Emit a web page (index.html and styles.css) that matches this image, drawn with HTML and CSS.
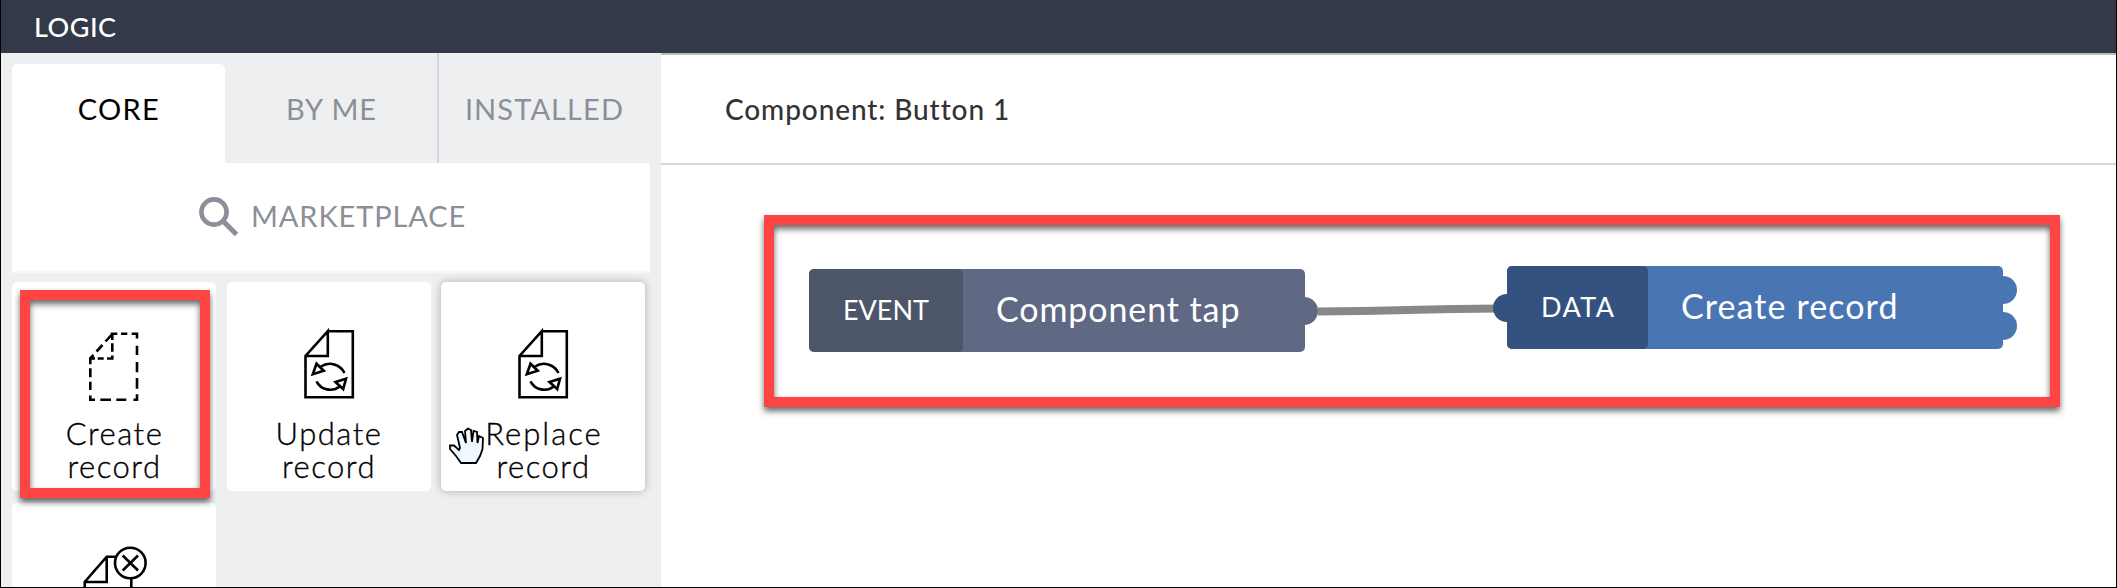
FILE: index.html
```html
<!DOCTYPE html>
<html lang="en">
<head>
<meta charset="utf-8">
<title>Logic</title>
<link rel="stylesheet" href="styles.css">
</head>
<body>
<div class="app">
  <header class="topbar"><span class="t-logic">LOGIC</span></header>
  <div class="main">
    <aside class="sidebar">
      <nav class="tabs">
        <div class="tab active"><span class="t-core">CORE</span></div>
        <div class="tab"><span class="t-byme">BY ME</span></div>
        <div class="tab divided"><span class="t-inst">INSTALLED</span></div>
      </nav>
      <div class="market">
        <svg class="search" width="42" height="42" viewBox="0 0 42 42"><circle cx="16" cy="16" r="12.6" fill="none" stroke="#8c8f97" stroke-width="4.6"/><path d="M26 26 L38.500 38.500" stroke="#8c8f97" stroke-width="5"/></svg>
        <span class="t-market">MARKETPLACE</span>
      </div>
      <div class="tiles">
        <div class="tile">
          <svg class="icon" width="70" height="72" viewBox="0 0 70 72" fill="none" stroke="#000" stroke-width="2.600"><path d="M31.700 3.800H38.300M42 3.800H48.300M52.700 3.800H58V8.500M58 15.700V25M58 32V42.300M58 48V58.700M58 64.300V69.700H54.500M47.300 69.700H37.300M32 69.700H21.300M16 69.700H11.300V65.500M11.300 60V51.700M11.300 47.300V38.300M11.300 34.300V28.500H16M18.700 28.500H24.700M28 28.500H33.300V25.500M33.300 21.700V13.300M33.300 10V3.800M11.300 28.500L14.500 25M17.500 21.500L23.500 15M26.500 11.500L33.300 4"/></svg>
          <div class="label"><span class="t-create">Create</span><span class="t-rec">record</span></div>
        </div>
        <div class="tile">
          <svg class="icon" width="70" height="72" viewBox="0 0 70 72"><use href="#sync"/></svg>
          <div class="label"><span class="t-update">Update</span><span class="t-rec">record</span></div>
        </div>
        <div class="tile hover">
          <svg class="icon" width="70" height="72" viewBox="0 0 70 72"><use href="#sync"/></svg>
          <div class="label"><span class="t-replace">Replace</span><span class="t-rec">record</span></div>
        </div>
        <div class="tile">
          <svg class="icon" width="70" height="72" viewBox="0 0 70 72" fill="none" stroke="#000" stroke-width="2.600"><path d="M37 5.700H27.700L5.700 31V72M5.700 31H27.700V5.700M52.300 27.700V72"/><circle cx="51.300" cy="12" r="15.300"/><path d="M43.700 4.500L59 19.500M59 4.500L43.700 19.500"/></svg>
        </div>
      </div>
    </aside>
    <section class="work">
      <div class="title"><span class="t-title">Component: Button 1</span></div>
      <div class="canvas">
        <svg class="wire" width="200" height="30" viewBox="0 0 200 30"><path d="M10 18.500C100 18.500 100 15.500 192 15.500" fill="none" stroke="#888" stroke-width="8"/></svg>
        <div class="node event"><i class="knob k-e"></i><div class="kind"><span class="t-event">EVENT</span></div><span class="t-tap">Component tap</span></div>
        <div class="node data"><i class="knob k-l"></i><i class="knob k-r1"></i><i class="knob k-r2"></i><div class="kind"><span class="t-data">DATA</span></div><span class="t-cr">Create record</span></div>
      </div>
    </section>
  </div>
  <div class="mark mark-tile"></div>
  <div class="mark mark-flow"></div>
  <svg class="hand" width="38" height="38" viewBox="0 0 38 38"><path d="M13 36L8 29L2 22V18.500H6L11 23L12 21L9 8L11 5H14L18 16L17 4L20 1.500L23 3L24 15L25.500 4L29 5L29.500 16L31 9L35 11L34.500 22L32 29L28 36Z" fill="#eff7ff" stroke="#000" stroke-width="1.800"/></svg>
</div>
<svg width="0" height="0" class="defs"><defs><g id="sync" fill="none" stroke="#000" stroke-width="2.600"><path d="M33.800 1.200H58.800V67.200H11.500V26L33.800 1.200V26H11.500"/><path d="M27 36.500A16.200 16.200 0 0 1 50.500 43M22.500 51.300A15.500 15.500 0 0 0 45.800 56.500"/><path d="M22.500 33.700L18.800 44.300L29.800 40.700ZM41.500 52L52 48.700L49.200 59Z"/></g></defs></svg>
</body>
</html>
```
FILE: styles.css
```css
* { box-sizing: border-box; }
body { margin: 0; font-family: Lato, "Open Sans", sans-serif; }
span { white-space: nowrap; }
.app { position: relative; width: 2117px; height: 588px; display: flex; flex-direction: column; overflow: hidden; border: 1px solid #000; border-top: 0; background: #fff; }
.topbar { height: 53px; background: #343949; color: #fff; padding-left: 33px; display: flex; align-items: center; font-size: 27px; font-weight: 500; letter-spacing: .5px; }
.main { flex: 1; min-height: 0; display: flex; }
.sidebar { width: 660px; background: #eeeff1; padding: 0 11px; }
.tabs { display: flex; height: 110px; color: #8c8f97; font-size: 29px; }
.tab { flex: 0 0 213px; display: flex; align-items: center; justify-content: center; }
.tab.active { margin-top: 11px; padding-bottom: 11px; background: #fff; color: #000; border-radius: 5px 5px 0 0; }
.tab.divided { margin-left: -1px; border-left: 2px solid #d5d6da; }
.t-core { letter-spacing: 1.3px; margin-right: -1px; }
.t-byme { letter-spacing: 1px; }
.t-inst { letter-spacing: 1.100px; }
.market { width: 638px; height: 110px; background: #fff; border-bottom: 2px solid #f7f8f9; display: flex; align-items: center; padding-left: 186px; gap: 11px; color: #8c8f97; font-size: 29px; }
.t-market { letter-spacing: .9px; padding-bottom: 3px; }
.tiles { display: grid; grid-template-columns: repeat(3, 204px); grid-auto-rows: 209px; gap: 12px 10.500px; padding-top: 9px; }
.tile { background: #fff; border-radius: 5px; display: flex; flex-direction: column; align-items: center; padding-top: 48px; }
.tile.hover { box-shadow: 0 0 8px rgba(0,0,0,.28); }
.icon { overflow: visible; flex: none; }
.label { display: flex; flex-direction: column; align-items: center; font-size: 31px; line-height: 33px; font-weight: 300; -webkit-text-stroke: .35px #000; margin-top: 15px; color: #000; }
.t-create, .t-rec, .t-update { letter-spacing: 1.500px; margin-right: -1px; }
.t-replace { letter-spacing: 2px; margin-right: -2px; }
.work { flex: 1; }
.title { height: 112px; border-top: 2px solid #bbb; border-bottom: 2px solid #d5d6da; padding-left: 64px; display: flex; align-items: center; font-size: 28px; font-weight: 500; letter-spacing: .9px; color: #333; }
.canvas { position: relative; }
.wire { position: absolute; left: 647px; top: 128px; }
.node { position: absolute; display: flex; align-items: center; height: 83px; border-radius: 5px; color: #fff; font-size: 34px; }
.event { left: 148px; top: 104px; width: 496px; background: #5f6984; }
.data { left: 846px; top: 101px; width: 496px; background: #4a75b3; }
.t-tap { letter-spacing: .9px; padding-bottom: 4px; }
.t-cr { letter-spacing: 1.100px; padding-bottom: 4px; }
.kind { height: 83px; border-radius: 5px; display: flex; align-items: center; padding: 0 0 2px 34px; font-size: 27px; position: relative; }
.event .kind { width: 154px; background: #4d5569; margin-right: 33px; }
.data .kind { width: 141px; background: #34527f; margin-right: 33px; }
.t-data { letter-spacing: 1.400px; }
.knob { position: absolute; width: 28px; height: 28px; border-radius: 50%; background: inherit; }
.k-e { left: 481px; top: 28px; }
.k-l { left: -14px; top: 28px; background: #34527f; }
.k-r1 { left: 482px; top: 10px; }
.k-r2 { left: 482px; top: 46px; }
.mark { position: absolute; border: 10px solid #ff4444; filter: drop-shadow(0 4px 3px rgba(0,0,0,.6)); }
.mark-tile { left: 19px; top: 290px; width: 190px; height: 208px; }
.mark-flow { left: 763px; top: 215px; width: 1296px; height: 192px; }
.hand { position: absolute; left: 447px; top: 427px; }
.defs { position: absolute; }
```
